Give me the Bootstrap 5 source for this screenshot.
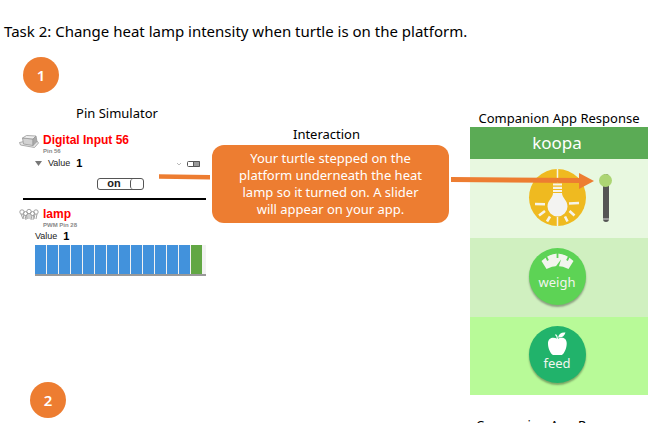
<!DOCTYPE html>
<html lang="en">
<head>
<meta charset="utf-8">
<meta name="viewport" content="width=device-width, initial-scale=1">
<title>Task 2: Heat lamp</title>
<link href="https://cdn.jsdelivr.net/npm/bootstrap@5.3.0/dist/css/bootstrap.min.css" rel="stylesheet">
<style>
  body { font-family: "Noto Sans", sans-serif; font-size: 13px; line-height: 18px; color: #000; background: #fff; }
  main { padding: 22px 4px 0 0; }
  h1 { font-size: 15px; line-height: 18px; font-weight: 400; margin: 0 0 17px; padding-left: 4px; }
  h2 { font-size: 13px; line-height: 18px; font-weight: 400; margin: 0; text-align: center; white-space: nowrap; }
  .first-step { padding-left: 23px; }
  .step-number { width: 36px; height: 36px; background: #ed7d31; color: #fff; font-size: 15px; font-weight: 600; flex: none; }
  .stage { display: grid; grid-template-columns: 212fr 258fr 178fr; margin-top: 11px; }
  .arial { font-family: "Liberation Sans", Arial, sans-serif; }

  .pin-column { padding-right: 6px; }
  .pin-column h2 { padding-left: 28px; }
  .pin-head { gap: 4px; margin-left: 19px; }
  .pin-head svg { width: 20px; height: 16px; flex: none; }
  .pin-head h3 { font-size: 12px; line-height: 14px; font-weight: 700; color: #f00; margin: 0; }
  .pin-head p { font-size: 6px; line-height: 9px; font-weight: 700; color: #888; margin: 0; }
  .value-line { font-size: 9px; line-height: 13px; gap: 6px; padding-left: 35px; color: #222; }
  .value-line b { font-size: 11px; color: #000; }
  .caret { width: 7px; height: 5px; background: #777; clip-path: polygon(0 0, 100% 0, 50% 100%); }
  .digital { border-bottom: 2px solid #000; margin-left: 23px; padding: 3px 0 8px; }
  .digital .pin-head { margin-left: -4px; }
  .digital .value-line { padding-left: 12px; margin-top: 1px; }
  .lamp-pin { padding-top: 7px; }
  .toggle { display: flex; width: 47px; height: 12px; border: 1px solid #555; border-radius: 3px; background: #fff; padding: 0; font-size: 11px; line-height: 9px; font-weight: 700; color: #222; margin: 8px auto 0 74px; }
  .toggle span { flex: 1; }
  .toggle i { width: 13px; align-self: stretch; border: 1px solid #555; border-width: 0 0 0 1px; border-radius: 3px; }
  .bars { margin: 2px 0 0 35px; height: 31px; gap: 1px; padding-right: 4px; background: #f2f2f2; border-bottom: 2px solid #999; }
  .bars span { flex: 1; background: #4292dc; }
  .bars span:last-child { background: #62a744; }

  .talk-column { padding: 21px 21px 0 0; }
  .bubble { background: #ed7d31; color: #fff; border-radius: 12px; margin-top: 2px; padding: 5px 18px; font-size: 13px; line-height: 17px; text-align: center; }
  .link-in { position: absolute; right: calc(100% + 2px); top: 29px; width: 51px; height: 6px; }
  .link-out { position: absolute; left: calc(100% + 2px); top: 27px; width: 143px; height: 18px; z-index: 2; }

  .app-column { padding-top: 5px; }
  .app-bar { background: #5bab55; color: #fff; font-size: 17px; line-height: 32px; text-align: center; padding-right: 4px; }
  .app-row { display: grid; grid-template-columns: 1fr 57px 1fr; align-items: center; height: 79px; padding: 0 4px 2px 0; }
  .row-lamp { background: #e8f8e0; }
  .row-weigh { background: #d0f0c0; }
  .row-feed { background: #b8fa98; height: 78px; padding-bottom: 4px; }
  .round { grid-column: 2; width: 57px; height: 57px; border: 0; border-radius: 50%; padding: 0; color: #f2f5ee; font-size: 13px; line-height: 16px; display: flex; flex-direction: column; align-items: center; justify-content: flex-start; }
  .round svg { width: 57px; flex: none; }
  .lamp { background: #efba20; overflow: hidden; }
  .weigh { background: #5dd355; box-shadow: 0 2px 2px #0005; }
  .feed { background: #21b36b; box-shadow: 0 2px 2px #0005; }
  .weigh svg { height: 26px; }
  .feed svg { height: 29px; }
  .lamp svg { height: 57px; }
  .slide-box { width: 14px; height: 50px; margin-left: 13px; }
  .slide-box input { appearance: none; width: 48px; height: 14px; flex: none; margin: 0; background: none; transform: rotate(-90deg); }
  .slide-box input::-webkit-slider-runnable-track { height: 6px; border-radius: 3px; background: linear-gradient(90deg, #555 2px, #999 2px, #999 4px, #555 4px); }
  .slide-box input::-webkit-slider-thumb { appearance: none; width: 13px; height: 13px; margin-top: -4px; border-radius: 50%; background: #acd573; }

  .next-step { margin-top: -13px; padding-left: 30px; }
  .next-step h2 { padding: 34px 11px 0 0; }
</style>
<script src="https://cdn.jsdelivr.net/npm/bootstrap@5.3.0/dist/js/bootstrap.bundle.min.js"></script>
</head>
<body>
<main class="vh-100 overflow-hidden">
  <h1>Task 2: Change heat lamp intensity when turtle is on the platform.</h1>
  <div class="first-step"><div class="step-number rounded-circle d-flex align-items-center justify-content-center">1</div></div>

  <div class="stage">
    <section class="pin-column">
      <h2>Pin Simulator</h2>
      <div class="arial">
        <div class="digital mt-2">
          <div class="pin-head d-flex">
            <svg viewBox="0 0 20 16" fill="#ddd" stroke="#999" stroke-width=".8"><path d="M.5 9.500L5 8.500h13.500l1 1.500-4 4.500-14-2.500z" fill="#e6e6e6"/><path d="M3.500 5l1 6 9.500 1.500V6z" fill="#d2d2d2"/><path d="M3.500 5l4-2.500L17 3l-3 3z" fill="#eee"/><path d="M14 6l3-3 1 5.500-4 4z" fill="#aaa"/></svg>
            <div><h3>Digital Input 56</h3><p>Pin 56</p></div>
          </div>
          <div class="value-line d-flex align-items-center">
            <span class="caret"></span><span>Value</span><b>1</b>
            <svg class="ms-auto me-1" width="26" height="8" viewBox="0 0 26 8" fill="none" stroke="#555"><path d="M1 3l2 2 2-2" stroke="#bbb"/><rect x="11.500" y="1.500" width="12" height="5" rx="1"/><path d="M17.500 1.500h6v5h-6z" fill="#999"/></svg>
          </div>
          <button class="toggle" type="button" role="switch" aria-checked="true" aria-label="Digital Input 56 on"><span>on</span><i></i></button>
        </div>
        <div class="pin-head lamp-pin d-flex">
          <svg viewBox="0 0 20 16" fill="none" stroke="#999" stroke-width=".9"><circle cx="3" cy="5" r="2.200"/><circle cx="10" cy="4.500" r="2.200"/><circle cx="17" cy="5" r="2.200"/><circle cx="6.500" cy="6.500" r="2"/><circle cx="13.500" cy="6.500" r="2"/><path d="M2 7l2 5M4 7l1 5M9 6v6M11 6v6M16 7l-1 5M18 7l-1 5M6 8l1 5M7.500 8l.5 4M13 8l-1 5M14.500 8l-.5 5"/></svg>
          <div><h3>lamp</h3><p>PWM Pin 28</p></div>
        </div>
        <div class="value-line d-flex align-items-center"><span>Value</span><b>1</b></div>
        <div class="bars d-flex" role="img" aria-label="Lamp level history"><span></span><span></span><span></span><span></span><span></span><span></span><span></span><span></span><span></span><span></span><span></span><span></span><span></span><span></span></div>
      </div>
    </section>

    <section class="talk-column">
      <h2 class="pe-2">Interaction</h2>
      <div class="bubble position-relative">
        Your turtle stepped on the<br>platform underneath the heat<br>lamp so it turned on. A slider<br>will appear on your app.
        <svg class="link-in" viewBox="0 0 51 6"><path d="M0 .3l51 .7v4.500L0 4.800z" fill="#ed7d31"/></svg>
        <svg class="link-out" viewBox="0 0 143 18"><path d="M0 5l128 1V1l15 8-15 8v-6L0 10z" fill="#ed7d31"/></svg>
      </div>
    </section>

    <section class="app-column">
      <h2>Companion App Response</h2>
      <div class="app-bar">koopa</div>
      <div class="app-row row-lamp">
        <button class="round lamp" type="button" aria-label="Lamp">
          <svg viewBox="0 0 57 57" fill="none" stroke="#f6f4ea" stroke-width="2"><path d="M28.500 0v14M28.500 48v9" stroke-width="1.500"/><path d="M6 35l10 .3M40 34.500l10-.5M10 46.500l6-4.500M18 52.500l3-5M40.500 42l5 4.500M36 47.500l2.500 5" stroke-width="2.600"/><path d="M24 15.500h9M24 18.800h9M24 22h9" stroke-width="2.200"/><path d="M24 24h9c0 5 5.500 7 5.500 13.500a10 10 0 0 1-20 0C18.500 31 24 29 24 24z" fill="#f3f3f1" stroke="none"/></svg>
        </button>
        <div class="slide-box d-flex align-items-center justify-content-center"><input type="range" min="0" max="100" value="100" aria-label="Lamp intensity"></div>
      </div>
      <div class="app-row row-weigh">
        <button class="round weigh" type="button">
          <svg viewBox="0 0 57 26"><path d="M12.500 13Q28.500-2 44.500 13L39.500 21Q28.500 15 17.500 21z" fill="#f2f5ee"/><path d="M28.500 5v5M17 8.500l2 4M40 8.500l-2 4" stroke="#5dd355" stroke-width="1.800"/><path d="M26 19.500l6-8-2.500 8z" fill="#5dd355"/></svg>
          <span>weigh</span>
        </button>
      </div>
      <div class="app-row row-feed">
        <button class="round feed" type="button">
          <svg viewBox="0 0 57 29" fill="#fff"><path d="M28.500 13c4-2.500 9-1.500 9.200 4 .2 5.500-3 12.500-6.500 12.500-1.500 0-2-.6-2.700-.6s-1.500.6-2.900.6c-3.500 0-6.800-7-6.600-12.500.3-5.500 5.500-6.500 9.500-4z"/><path d="M29 11.500c1-4 3.500-5.500 7.500-5-1 3.500-3.500 5.500-7.500 5z"/><path d="M26.500 8.500q2 1.500 2 5" fill="none" stroke="#fff" stroke-width="1.300"/></svg>
          <span>feed</span>
        </button>
      </div>
    </section>
  </div>

  <div class="next-step d-flex justify-content-between align-items-start">
    <div class="step-number rounded-circle d-flex align-items-center justify-content-center">2</div>
    <h2>Companion App Response</h2>
  </div>
</main>
</body>
</html>
